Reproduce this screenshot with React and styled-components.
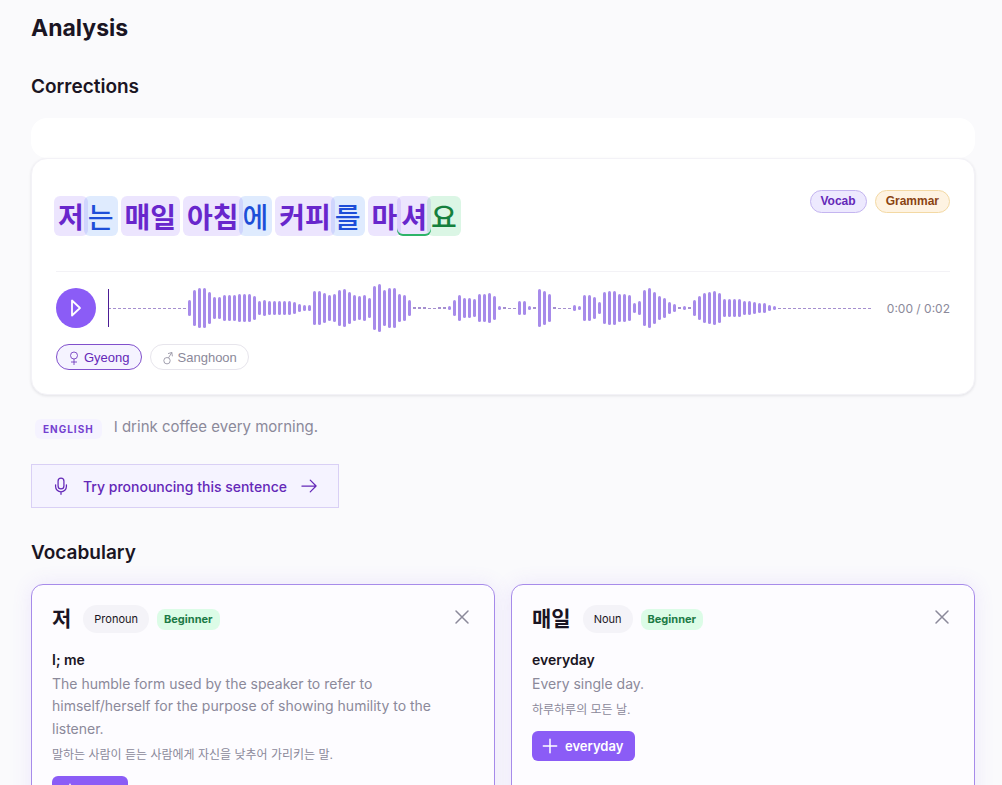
import React, { useState } from 'react';
import styled, { createGlobalStyle, css } from 'styled-components';

const palette = {
  ink: '#1a1523',
  gray: '#8b899a',
  page: '#fafafc',
  violet: '#8b5cf6',
  deep: '#6428b8',
  soft: '#f5f3ff',
};

const sans = `Inter, 'Noto Sans CJK KR', sans-serif`;
const control = `'Liberation Sans', Arial, sans-serif`;

const GlobalStyle = createGlobalStyle`
  * {
    box-sizing: border-box;
  }
  body {
    margin: 0;
    background: ${palette.page};
    color: ${palette.ink};
    font-family: ${sans};
  }
  button {
    font-family: inherit;
    cursor: pointer;
  }
`;

const tokens = [
  { text: '저', kind: 'vocab' },
  { text: '는', kind: 'particle', space: true },
  { text: '매일', kind: 'vocab', space: true },
  { text: '아침', kind: 'vocab' },
  { text: '에', kind: 'particle', space: true },
  { text: '커피', kind: 'vocab' },
  { text: '를', kind: 'particle', space: true },
  { text: '마', kind: 'vocab' },
  { text: '셔', kind: 'vocab', marked: true },
  { text: '요', kind: 'ending' },
];

const silence = count => Array(count).fill(1);

const levels = [
  ...silence(16),
  16, 36, 40, 40, 32, 22, 22, 26, 26, 26, 28, 28, 28, 24, 14, 16, 14, 14, 14,
  14, 14, 12, 8, 6, 6, 34, 34, 30, 26, 28, 36, 38, 32, 26, 24, 26, 20, 44, 48,
  36, 40, 40, 28, 26, 16, 2, 2, 2, 1, 1, 2, 2, 4, 16, 26, 20, 20, 18, 28, 28,
  30, 24, 4, 2, 1, 1, 14, 14, 4, 2, 38, 34, 28, 2, 1, 1, 1, 6, 4, 26, 26, 22,
  12, 32, 34, 34, 28, 28, 26, 10, 14, 36, 40, 32, 24, 20, 12, 8, 2, 4, 2, 16,
  24, 30, 32, 34, 30, 18, 18, 18, 18, 14, 14, 12, 10, 10, 6, 4,
  ...silence(19),
];

const voices = [
  {
    id: 'gyeong',
    name: 'Gyeong',
    sign: 'M5 2a3.5 3.5 0 1 0 0 7a3.5 3.5 0 1 0 0-7M5 9v6M2 12h6',
  },
  {
    id: 'sanghoon',
    name: 'Sanghoon',
    sign:
      'M4 7.5a3.2 3.2 0 1 0 0 6.4a3.2 3.2 0 1 0 0-6.4M5.5 7.8L8.8 2.5M5 3.6l3.8-1.1l.6 3.8',
  },
];

const words = [
  {
    word: '저',
    type: 'Pronoun',
    level: 'Beginner',
    meaning: 'I; me',
    detail:
      'The humble form used by the speaker to refer to himself/herself for the purpose of showing humility to the listener.',
    korean: '말하는 사람이 듣는 사람에게 자신을 낮추어 가리키는 말.',
  },
  {
    word: '매일',
    type: 'Noun',
    level: 'Beginner',
    meaning: 'everyday',
    detail: 'Every single day.',
    korean: '하루하루의 모든 날.',
  },
];

const Icon = ({ size, children, weight = 1.5 }) => (
  <svg
    width={size}
    height={size}
    viewBox="0 0 24 24"
    fill="none"
    stroke="currentColor"
    strokeWidth={weight}
    strokeLinecap="round"
    strokeLinejoin="round"
    aria-hidden="true"
  >
    {children}
  </svg>
);

const Waveform = () => (
  <WaveSvg aria-hidden="true">
    {levels.map((level, i) => (
      <rect
        key={i}
        x={i * 5}
        y={level === 1 ? 24 : 24 - level / 2}
        width="3"
        height={level}
        rx={level > 3 ? 1.5 : 0}
        fill={level > 3 ? '#a78bea' : '#a58fcf'}
      />
    ))}
    <rect x="0" y="5" width="1" height="38" fill="#4c1d95" />
  </WaveSvg>
);

const Player = () => {
  const [voice, setVoice] = useState('gyeong');

  return (
    <>
      <PlayerRow>
        <PlayButton type="button" aria-label="Play">
          <Icon size={24} weight={1.8}>
            <path d="M8 4.5v15l8-7.5z" />
          </Icon>
        </PlayButton>
        <Waveform />
        <Time>0:00 / 0:02</Time>
      </PlayerRow>
      <VoiceRow>
        {voices.map(v => (
          <VoiceButton
            key={v.id}
            type="button"
            $active={v.id === voice}
            onClick={() => setVoice(v.id)}
          >
            <svg
              width="10"
              height="15"
              fill="none"
              stroke="currentColor"
              strokeWidth="0.8"
              aria-hidden="true"
            >
              <path d={v.sign} />
            </svg>
            {v.name}
          </VoiceButton>
        ))}
      </VoiceRow>
    </>
  );
};

const WordCard = ({ item }) => (
  <CardBlock>
    <CardHead>
      <Word lang="ko">{item.word}</Word>
      <TypePill>{item.type}</TypePill>
      <LevelPill>{item.level}</LevelPill>
      <CloseButton type="button" aria-label="Dismiss">
        <Icon size={24}>
          <path d="M6 6l12 12M18 6L6 18" />
        </Icon>
      </CloseButton>
    </CardHead>
    <Meaning>{item.meaning}</Meaning>
    <Detail>{item.detail}</Detail>
    <KoreanDetail lang="ko">{item.korean}</KoreanDetail>
    <AddButton type="button">
      <Icon size={20} weight={1.8}>
        <path d="M12 4v16M4 12h16" />
      </Icon>
      {item.meaning}
    </AddButton>
  </CardBlock>
);

const App = () => (
  <Page>
    <GlobalStyle />
    <Title>Analysis</Title>
    <SectionTitle>Corrections</SectionTitle>
    <Strip />
    <SentenceCard>
      <SentenceHead>
        <Sentence lang="ko">
          {tokens.map((token, i) => (
            <React.Fragment key={i}>
              <Token $kind={token.kind} $marked={token.marked}>
                {token.text}
              </Token>
              {token.space && ' '}
            </React.Fragment>
          ))}
        </Sentence>
        <Tags>
          <Tag>Vocab</Tag>
          <Tag $warm>Grammar</Tag>
        </Tags>
      </SentenceHead>
      <Player />
    </SentenceCard>
    <Translation>
      <Language>English</Language>
      <p>I drink coffee every morning.</p>
    </Translation>
    <PracticeButton type="button">
      <Icon size={20}>
        <rect x="8.5" y="2.5" width="7" height="13" rx="3.5" />
        <path d="M5.5 10.5v2a6.5 6.5 0 0 0 13 0v-2M12 19v3" />
      </Icon>
      Try pronouncing this sentence
      <Icon size={20}>
        <path d="M3.5 12h17M13.5 5l7 7-7 7" />
      </Icon>
    </PracticeButton>
    <SectionTitle>Vocabulary</SectionTitle>
    <Cards>
      {words.map(item => (
        <WordCard key={item.word} item={item} />
      ))}
    </Cards>
  </Page>
);

const Page = styled.main`
  padding: 12px 27px 40px 31px;
`;

const Title = styled.h1`
  margin: 0 0 29px;
  font-size: 23px;
  line-height: 32px;
  font-weight: 700;
`;

const SectionTitle = styled.h2`
  margin: 0 0 17px;
  font-size: 19px;
  line-height: 28px;
  font-weight: 600;
`;

const Strip = styled.div`
  height: 40px;
  border-radius: 16px;
  background: #ffffff;
`;

const SentenceCard = styled.section`
  padding: 24px;
  border: 1px solid #f3f2f7;
  border-radius: 16px;
  background: #ffffff;
  box-shadow: 0 1px 3px rgba(20, 16, 40, 0.1);
`;

const SentenceHead = styled.div`
  display: flex;
  justify-content: space-between;
  align-items: flex-start;
  gap: 16px;
  padding: 7px 0 26px;
  border-bottom: 1px solid #f3f2f6;
`;

const Sentence = styled.p`
  margin: 0;
  padding: 6px 0;
  font-family: Roboto, sans-serif;
  font-size: 28px;
  line-height: 40px;
  font-weight: 500;
`;

const tokenKinds = {
  vocab: css`
    color: #6826cc;
    background: rgba(139, 92, 246, 0.16);
    font-weight: 600;
  `,
  particle: css`
    color: #1d4ed8;
    background: rgba(59, 130, 246, 0.16);
  `,
  ending: css`
    color: #15803d;
    background: rgba(34, 197, 94, 0.16);
  `,
};

const Token = styled.span`
  margin: 0 -2px;
  padding: 0 4px;
  border-radius: 6px;
  font-family: 'Noto Sans CJK KR', sans-serif;
  ${props => tokenKinds[props.$kind]}
  ${props =>
    props.$marked &&
    css`
      box-shadow: inset 0 -2px 0 #2fb469;
    `}
`;

const Tags = styled.div`
  display: flex;
  gap: 8px;
`;

const Tag = styled.span`
  padding: 0 10px;
  border: 1px solid ${props => (props.$warm ? '#f3d9a4' : '#c4b5f0')};
  border-radius: 12px;
  background: ${props => (props.$warm ? '#fef3e2' : '#ede9fe')};
  color: ${props => (props.$warm ? '#8a4413' : palette.deep)};
  font-family: ${control};
  font-size: 12px;
  line-height: 21px;
  font-weight: 600;
`;

const PlayerRow = styled.div`
  display: flex;
  align-items: center;
  gap: 12px;
  margin-top: 12px;
`;

const PlayButton = styled.button`
  display: flex;
  align-items: center;
  justify-content: center;
  flex: none;
  width: 40px;
  height: 40px;
  padding: 0;
  border: 0;
  border-radius: 50%;
  background: ${palette.violet};
  color: #ffffff;
`;

const WaveSvg = styled.svg`
  display: block;
  flex: 1;
  min-width: 0;
  height: 48px;
`;

const Time = styled.span`
  flex: none;
  color: ${palette.gray};
  font-size: 12px;
`;

const VoiceRow = styled.div`
  display: flex;
  gap: 8px;
  margin-top: 12px;
`;

const VoiceButton = styled.button`
  display: flex;
  align-items: center;
  gap: 5px;
  height: 26px;
  padding: 0 11px 0 12px;
  border: 1px solid ${props => (props.$active ? '#8150cc' : '#e7e5ec')};
  border-radius: 13px;
  background: ${props => (props.$active ? palette.soft : '#ffffff')};
  color: ${props => (props.$active ? palette.deep : palette.gray)};
  font-family: ${control};
  font-size: 13px;
`;

const Translation = styled.div`
  display: flex;
  align-items: center;
  gap: 12px;
  margin-top: 20px;
  padding: 0 4px;
  color: ${palette.gray};
  font-size: 15px;
  line-height: 24px;

  p {
    margin: 0;
  }
`;

const Language = styled.span`
  margin-top: 4px;
  padding: 0 8px;
  border-radius: 6px;
  background: ${palette.soft};
  color: #7440d0;
  font-size: 10px;
  line-height: 20px;
  font-weight: 700;
  letter-spacing: 1px;
  text-transform: uppercase;
`;

const PracticeButton = styled.button`
  display: flex;
  align-items: center;
  gap: 12px;
  height: 44px;
  margin: 25px 0 31px;
  padding: 0 19px;
  border: 1px solid #d9d0f5;
  background: ${palette.soft};
  color: ${palette.deep};
  font-size: 14px;
  font-weight: 500;
`;

const Cards = styled.div`
  display: grid;
  grid-template-columns: 1fr 1fr;
  gap: 16px;
`;

const CardBlock = styled.article`
  padding: 20px;
  border: 1px solid #a78bea;
  border-radius: 12px;
  background: #fdfcff;
  box-shadow: 0 0 20px rgba(139, 92, 246, 0.12);
`;

const CardHead = styled.header`
  display: flex;
  align-items: center;
  gap: 8px;
`;

const Word = styled.h3`
  margin: 0 4px 0 0;
  font-size: 21px;
  line-height: 28px;
  font-weight: 700;
`;

const TypePill = styled.span`
  padding: 0 11px;
  border-radius: 14px;
  background: #f4f3f8;
  font-size: 11px;
  line-height: 28px;
`;

const LevelPill = styled.span`
  padding: 0 7px;
  border-radius: 8px;
  background: #dcfce7;
  color: #1d7a45;
  font-size: 11px;
  line-height: 21px;
  font-weight: 700;
`;

const CloseButton = styled.button`
  display: flex;
  align-self: flex-start;
  margin-left: auto;
  padding: 0;
  border: 0;
  background: none;
  color: ${palette.gray};
`;

const Meaning = styled.h4`
  margin: 15px 0 2px;
  font-size: 14px;
  line-height: 23px;
  font-weight: 600;
`;

const Detail = styled.p`
  margin: 0;
  color: ${palette.gray};
  font-size: 14px;
  line-height: 1.6;
`;

const KoreanDetail = styled.p`
  margin: 5px 0 11px;
  color: ${palette.gray};
  font-size: 12px;
  line-height: 20px;
`;

const AddButton = styled.button`
  display: flex;
  align-items: center;
  gap: 5px;
  height: 30px;
  padding: 0 12px 0 8px;
  border: 0;
  border-radius: 6px;
  background: ${palette.violet};
  color: #ffffff;
  font-size: 13px;
  font-weight: 600;
`;

export default App;
